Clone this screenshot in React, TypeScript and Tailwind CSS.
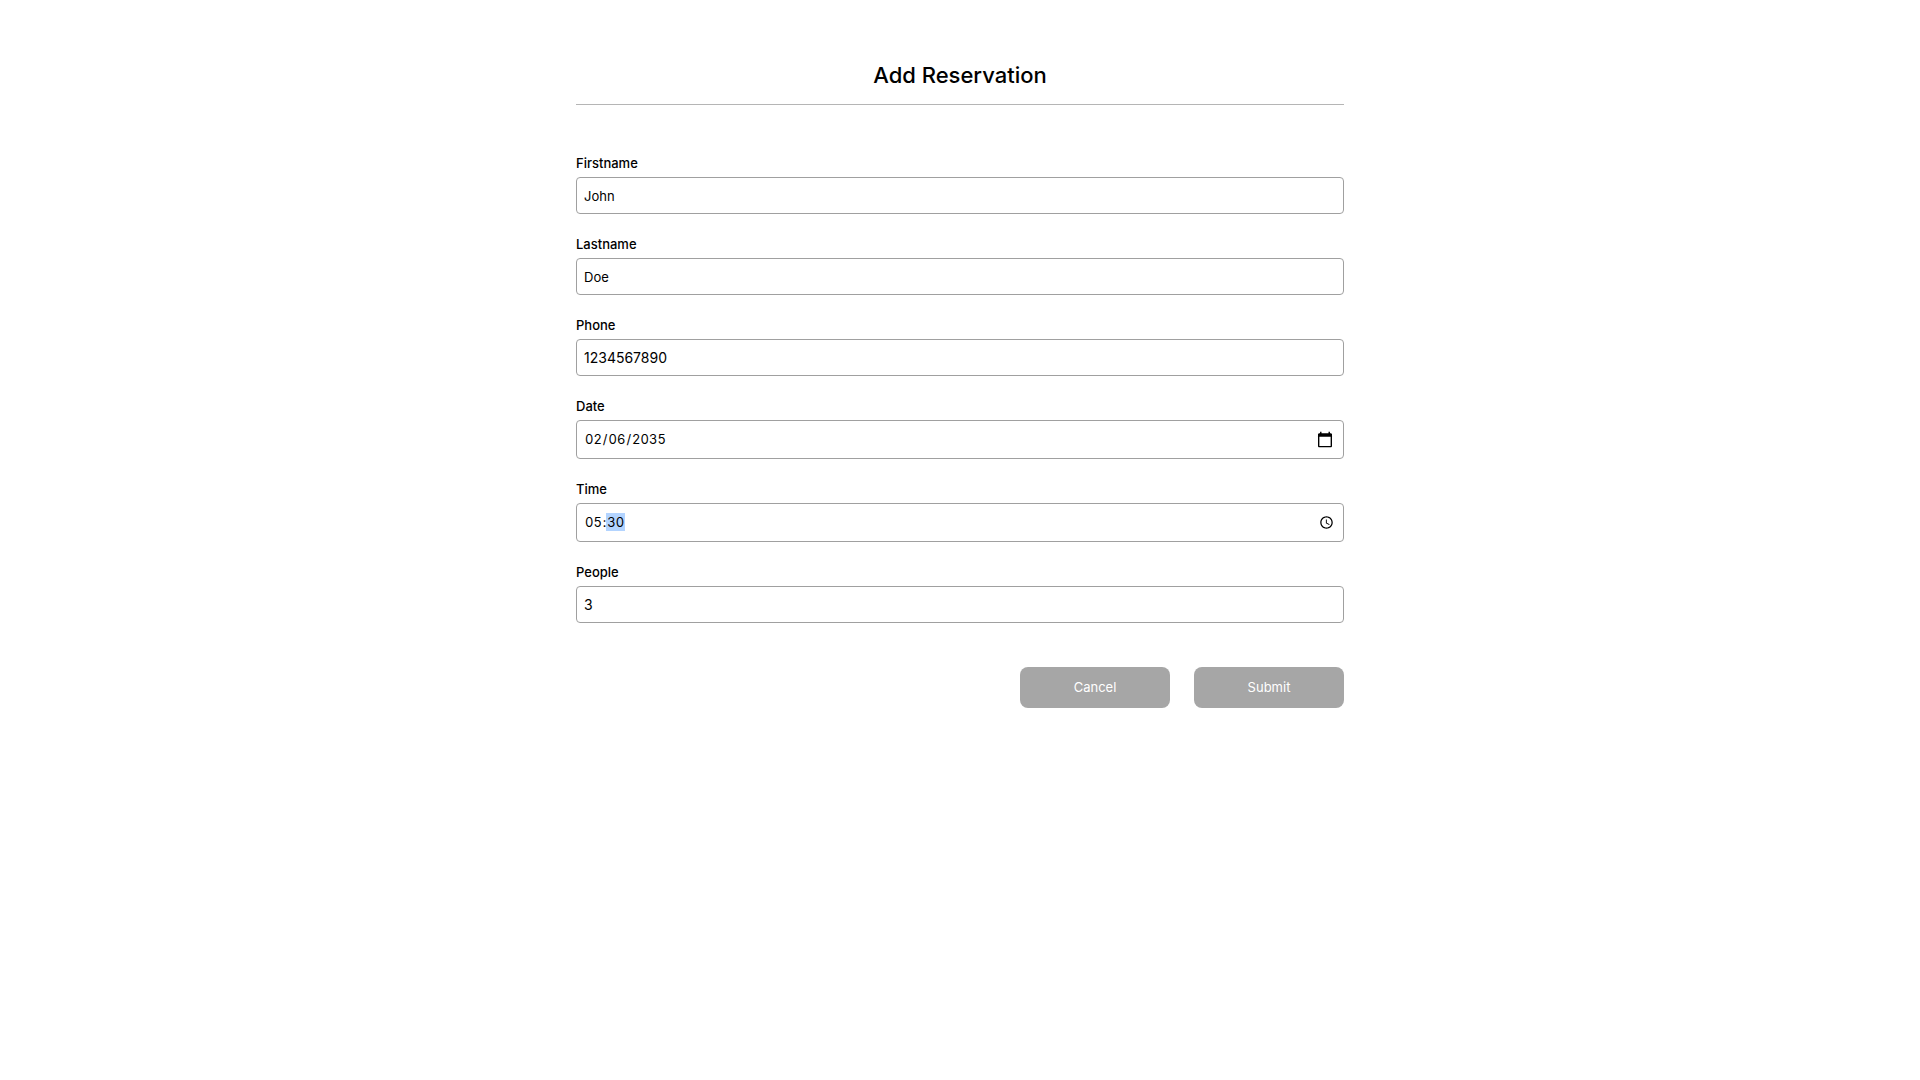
import React from "react";

const boxClass = "w-full rounded-[4px] border border-[#a0a0a0] px-[7px]";
const textClass = `${boxClass} h-[37px] text-[13px]`;
const numberClass = `${boxClass} h-[37px] text-sm`;
const dateClass = `${boxClass} h-[39px] text-[13px] tabular-nums [&::-webkit-calendar-picker-indicator]:mr-0.5 [&::-webkit-calendar-picker-indicator]:h-[18px] [&::-webkit-calendar-picker-indicator]:w-[18px] [&::-webkit-calendar-picker-indicator]:p-0 [&::-webkit-calendar-picker-indicator]:bg-size-[18px]`;
const timeClass = `${boxClass} h-[39px] text-[13px] tabular-nums [&::-webkit-calendar-picker-indicator]:h-[15px] [&::-webkit-calendar-picker-indicator]:w-[15px] [&::-webkit-calendar-picker-indicator]:mr-0.5 [&::-webkit-calendar-picker-indicator]:p-0 [&::-webkit-calendar-picker-indicator]:bg-size-[15px] [&::-webkit-datetime-edit-ampm-field]:hidden [&::-webkit-datetime-edit-minute-field]:bg-[#b3d4ff] [&::-webkit-datetime-edit-minute-field]:py-px`;

const fields = [
  { id: "firstname", label: "Firstname", type: "text", value: "John", style: textClass },
  { id: "lastname", label: "Lastname", type: "text", value: "Doe", style: textClass },
  { id: "phone", label: "Phone", type: "text", value: "1234567890", style: numberClass },
  { id: "date", label: "Date", type: "date", value: "2035-02-06", style: dateClass },
  { id: "time", label: "Time", type: "time", value: "05:30", style: timeClass },
  { id: "people", label: "People", type: "text", value: "3", style: numberClass },
];

export default function App() {
  return (
    <main className="mx-auto w-2/5 pt-[60px] font-['Inter',sans-serif] text-black">
      <h1 className="border-b border-[#b5b5b5] pb-[14px] text-center text-[22px] leading-[30px] font-medium">
        Add Reservation
      </h1>
      <form className="mt-12 flex flex-col">
        {fields.map((f) => (
          <div key={f.id} className="mb-5 flex flex-col">
            <label htmlFor={f.id} className="mb-1 text-[13px] leading-5 font-medium">
              {f.label}
            </label>
            <input id={f.id} type={f.type} defaultValue={f.value} className={f.style} />
          </div>
        ))}
        <div className="mt-6 flex justify-end gap-6">
          <button type="button" className="h-[41px] w-[150px] rounded-lg bg-[#a6a6a6] text-[13px] text-white">
            Cancel
          </button>
          <button type="submit" className="h-[41px] w-[150px] rounded-lg bg-[#a6a6a6] text-[13px] text-white">
            Submit
          </button>
        </div>
      </form>
    </main>
  );
}
